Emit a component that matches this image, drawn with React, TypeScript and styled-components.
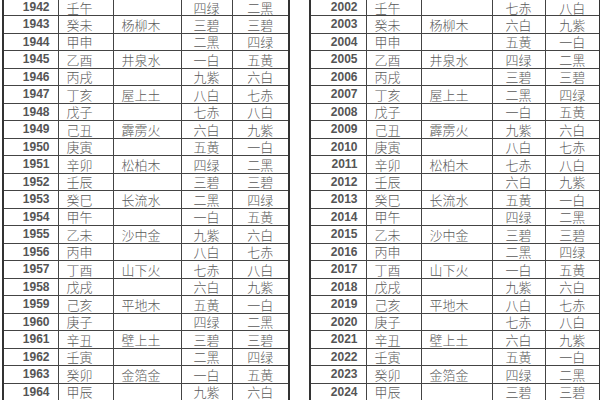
import { createGlobalStyle } from 'styled-components';
import styled from 'styled-components';

const GlobalStyle = createGlobalStyle`
  html, body {
    margin: 0;
    padding: 0;
    background: #fff;
    overflow: hidden;
  }
`;

const Page = styled.div`
  display: flex;
  align-items: flex-start;
  gap: 19px;
  padding-left: 2px;
  margin-top: -3px;
  width: 600px;
  height: 404px;
  overflow: hidden;
`;

const Table = styled.table`
  border-collapse: collapse;
  table-layout: fixed;
  border: 2px solid #333;
  font-family: 'Noto Sans CJK SC', 'Liberation Serif', serif;
`;

const Row = styled.tr`
  height: 17.5px;
`;

const Cell = styled.td<{ $align?: 'left' | 'center' | 'right' }>`
  border: 1px solid #444;
  padding: 0 ${({ $align }) => ($align === 'center' || !$align ? 0 : 8)}px;
  text-align: ${({ $align }) => $align || 'center'};
  font-size: 13px;
  font-weight: 300;
  line-height: 1;
  color: #5a5a5a;
  white-space: nowrap;
  overflow: hidden;
`;

const YearCell = styled(Cell)`
  font-family: 'Liberation Sans', Arial, sans-serif;
  font-weight: bold;
  font-size: 12px;
  color: #555;
`;

type Entry = [string, string, string, string, string];

const leftRows: Entry[] = [
  ['1942', '壬午', '', '四绿', '二黑'],
  ['1943', '癸未', '杨柳木', '三碧', '三碧'],
  ['1944', '甲申', '', '二黑', '四绿'],
  ['1945', '乙酉', '井泉水', '一白', '五黄'],
  ['1946', '丙戌', '', '九紫', '六白'],
  ['1947', '丁亥', '屋上土', '八白', '七赤'],
  ['1948', '戊子', '', '七赤', '八白'],
  ['1949', '己丑', '霹雳火', '六白', '九紫'],
  ['1950', '庚寅', '', '五黄', '一白'],
  ['1951', '辛卯', '松柏木', '四绿', '二黑'],
  ['1952', '壬辰', '', '三碧', '三碧'],
  ['1953', '癸巳', '长流水', '二黑', '四绿'],
  ['1954', '甲午', '', '一白', '五黄'],
  ['1955', '乙未', '沙中金', '九紫', '六白'],
  ['1956', '丙申', '', '八白', '七赤'],
  ['1957', '丁酉', '山下火', '七赤', '八白'],
  ['1958', '戊戌', '', '六白', '九紫'],
  ['1959', '己亥', '平地木', '五黄', '一白'],
  ['1960', '庚子', '', '四绿', '二黑'],
  ['1961', '辛丑', '壁上土', '三碧', '三碧'],
  ['1962', '壬寅', '', '二黑', '四绿'],
  ['1963', '癸卯', '金箔金', '一白', '五黄'],
  ['1964', '甲辰', '', '九紫', '六白'],
];

const rightRows: Entry[] = [
  ['2002', '壬午', '', '七赤', '八白'],
  ['2003', '癸未', '杨柳木', '六白', '九紫'],
  ['2004', '甲申', '', '五黄', '一白'],
  ['2005', '乙酉', '井泉水', '四绿', '二黑'],
  ['2006', '丙戌', '', '三碧', '三碧'],
  ['2007', '丁亥', '屋上土', '二黑', '四绿'],
  ['2008', '戊子', '', '一白', '五黄'],
  ['2009', '己丑', '霹雳火', '九紫', '六白'],
  ['2010', '庚寅', '', '八白', '七赤'],
  ['2011', '辛卯', '松柏木', '七赤', '八白'],
  ['2012', '壬辰', '', '六白', '九紫'],
  ['2013', '癸巳', '长流水', '五黄', '一白'],
  ['2014', '甲午', '', '四绿', '二黑'],
  ['2015', '乙未', '沙中金', '三碧', '三碧'],
  ['2016', '丙申', '', '二黑', '四绿'],
  ['2017', '丁酉', '山下火', '一白', '五黄'],
  ['2018', '戊戌', '', '九紫', '六白'],
  ['2019', '己亥', '平地木', '八白', '七赤'],
  ['2020', '庚子', '', '七赤', '八白'],
  ['2021', '辛丑', '壁上土', '六白', '九紫'],
  ['2022', '壬寅', '', '五黄', '一白'],
  ['2023', '癸卯', '金箔金', '四绿', '二黑'],
  ['2024', '甲辰', '', '三碧', '三碧'],
];

function YearTable({ rows, widths }: { rows: Entry[]; widths: number[] }) {
  return (
    <Table style={{ width: widths.reduce((a, b) => a + b, 0) }}>
      <colgroup>
        {widths.map((w, i) => (
          <col key={i} style={{ width: w }} />
        ))}
      </colgroup>
      <tbody>
        {rows.map(([year, gz, ny, a, b]) => (
          <Row key={year}>
            <YearCell $align="right">{year}</YearCell>
            <Cell $align="left">{gz}</Cell>
            <Cell $align="left">{ny}</Cell>
            <Cell>{a}</Cell>
            <Cell>{b}</Cell>
          </Row>
        ))}
      </tbody>
    </Table>
  );
}

export default function App() {
  return (
    <>
      <GlobalStyle />
      <Page>
        <YearTable rows={leftRows} widths={[55, 55, 68, 51, 57]} />
        <YearTable rows={rightRows} widths={[56, 55, 71, 53, 55]} />
      </Page>
    </>
  );
}
